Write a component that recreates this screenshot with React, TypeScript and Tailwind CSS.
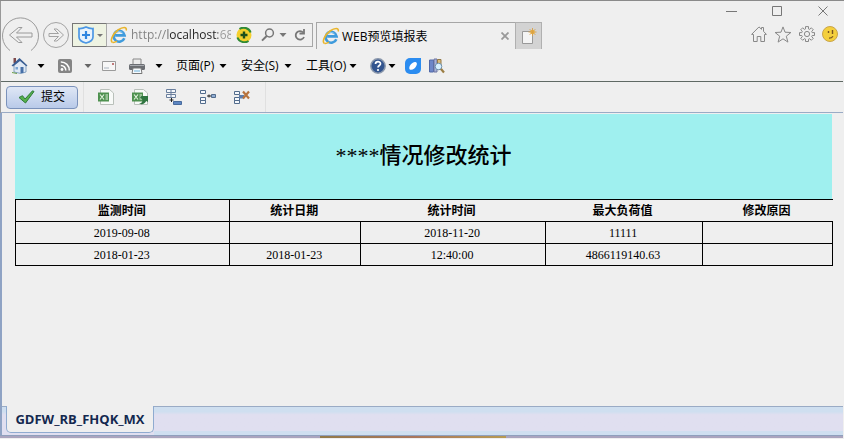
import type { ReactNode } from "react";

const rows = [
  ["2019-09-08", "", "2018-11-20", "11111", ""],
  ["2018-01-23", "2018-01-23", "12:40:00", "4866119140.63", ""],
];

const headers = ["监测时间", "统计日期", "统计时间", "最大负荷值", "修改原因"];

function Caret({ className = "text-black" }: { className?: string }) {
  return (
    <svg viewBox="0 0 8 4" className={`h-1 w-2 shrink-0 ${className}`} aria-hidden="true">
      <path d="M.5 0h7L4 4z" fill="currentColor" />
    </svg>
  );
}

function BrowserLogo() {
  return (
    <svg viewBox="0 0 18 18" className="size-[18px] shrink-0" fill="none" aria-hidden="true">
      <path d="M14.300 12.200A5.500 5.500 0 1 1 14.600 9.400H5.200" stroke="#3f9bdc" strokeWidth="2.600" />
      <path d="M5.400 7.600c.8-3 6.600-3 7.200 0" stroke="#8ccbf2" strokeWidth="1" />
      <path d="M2.600 16.400C-.5 15.500 2.500 8 8 4c4.500-3.200 9.200-3.800 8.200.5" stroke="#e9b52c" strokeWidth="1.600" />
      <path d="M2.600 16.400c1.400.4 3-.4 4.400-1.400" stroke="#e9b52c" strokeWidth="1.400" />
    </svg>
  );
}

function IconButton({ label, children, className = "" }: { label: string; children: ReactNode; className?: string }) {
  return (
    <button type="button" aria-label={label} className={`flex shrink-0 items-center ${className}`}>
      {children}
    </button>
  );
}

function WindowControls() {
  return (
    <div className="flex h-5 items-center justify-end gap-[35px] pr-[14px] text-[#777]">
      <IconButton label="最小化">
        <svg viewBox="0 0 11 11" className="size-[11px]" fill="none" stroke="currentColor">
          <path d="M0 5.500h11" />
        </svg>
      </IconButton>
      <IconButton label="最大化">
        <svg viewBox="0 0 11 11" className="size-[11px]" fill="none" stroke="currentColor">
          <path d="M.5.5h9v9h-9z" />
        </svg>
      </IconButton>
      <IconButton label="关闭">
        <svg viewBox="0 0 11 11" className="size-[11px]" fill="none" stroke="currentColor">
          <path d="M.5.5l9 9M9.500.5l-9 9" />
        </svg>
      </IconButton>
    </div>
  );
}

function AddressBar() {
  return (
    <div className="ml-[2px] flex h-6 w-[241px] shrink-0 items-center border border-[#a6a6a6]">
      <button
        type="button"
        aria-label="安全防护"
        className="-my-px -ml-px flex h-6 w-[35px] shrink-0 items-center justify-center gap-[2px] border border-[#777] border-r-[#aaa] bg-[#eef3e2]"
      >
        <svg viewBox="0 0 18 18" className="size-[18px]" fill="none" aria-hidden="true">
          <path d="M2 2.500c3 .2 5-.5 7-1.500 2 1 4 1.700 7 1.500V11c0 3-3 5-7 6-4-1-7-3-7-6z" fill="#e8f3fd" stroke="#4c97e4" strokeWidth="1.700" />
          <path d="M9 5v8M5 9h8" stroke="#2f86e0" strokeWidth="2.200" />
        </svg>
        <svg viewBox="0 0 6 3" className="h-[3px] w-[6px]" aria-hidden="true">
          <path d="M0 0h6L3 3z" fill="#777" />
        </svg>
      </button>
      <div className="ml-[3px] flex">
        <BrowserLogo />
      </div>
      <input
        type="text"
        aria-label="地址"
        defaultValue="http://localhost:68"
        className="ml-[3px] w-[100px] min-w-0 bg-[linear-gradient(90deg,#808080_37px,#222_37px,#222_87px,#999_87px)] bg-clip-text font-['Open_Sans','Noto_Sans',sans-serif] text-[12px] leading-4 text-transparent outline-none"
      />
      <IconButton label="加速" className="ml-[5px]">
        <svg viewBox="0 0 16 16" className="size-4" fill="none">
          <circle cx="8" cy="8" r="7.500" fill="#f5cf2d" />
          <path d="M3.500 2C7-.5 13 .5 14.600 5.500M1.400 10.500c1.600 4.500 7.600 6 11.100 3.500" stroke="#2f8a35" strokeWidth="2" />
          <path d="M8 4.500v7M4.500 8h7" stroke="#1e4f1c" strokeWidth="2.400" />
        </svg>
      </IconButton>
      <IconButton label="搜索" className="ml-[9px] text-[#777]">
        <svg viewBox="0 0 14 14" className="size-[14px]" fill="none" stroke="currentColor">
          <circle cx="8.500" cy="5" r="3.900" strokeWidth="1.500" />
          <path d="M5.700 8L1 12.600" strokeWidth="2" />
        </svg>
      </IconButton>
      <Caret className="ml-[4px] text-[#777]" />
      <IconButton label="刷新" className="ml-[7px] text-[#777]">
        <svg viewBox="0 0 12 14" className="h-[14px] w-3" fill="none" stroke="currentColor" strokeWidth="1.800">
          <path d="M9.200 4.500A4.300 4.300 0 1 0 10 9" />
          <path d="M10 1v4.500H5.500" />
        </svg>
      </IconButton>
    </div>
  );
}

function NavigationRow() {
  return (
    <div className="flex h-7 items-center pr-[5px]">
      <IconButton label="后退">
        <svg viewBox="0 0 38 28" className="h-7 w-[38px] overflow-visible" fill="none" stroke="#9a9a9a">
          <path d="M9 29.500A18 18 0 1 1 30 29.500" />
          <path d="M8.500 14l9-7.500h3.500l-5.500 5.500H31v4H15.500l5.500 5.500H17.500z" />
        </svg>
      </IconButton>
      <IconButton label="前进" className="ml-[3px]">
        <svg viewBox="0 0 28 28" className="size-7 overflow-visible" fill="none" stroke="#a3a3a3">
          <circle cx="14" cy="14" r="12.500" />
          <path d="M21.500 14l-6.500-6h-3l4.500 4.500H7v3h9.500L12 20h3z" />
        </svg>
      </IconButton>
      <AddressBar />
      <div className="ml-[3px] mt-px flex h-[27px] shrink-0 text-xs">
        <div className="flex w-[199px] items-center border-l border-t border-[#a6a6a6] pl-[5px] pr-[6px]">
          <BrowserLogo />
          <span className="ml-[2px] whitespace-nowrap pt-[2px] font-['Open_Sans','Noto_Sans_CJK_SC',sans-serif]">WEB预览填报表</span>
          <IconButton label="关闭标签页" className="ml-auto">
            <svg viewBox="0 0 8 8" className="size-2" stroke="#999" strokeWidth="1.800">
              <path d="M.5.5l7 7M7.500.5l-7 7" />
            </svg>
          </IconButton>
        </div>
        <button type="button" aria-label="新建标签页" className="flex w-[27px] items-center justify-center border border-b-0 border-[#b0b0b0] bg-[#d3d3d3]">
          <svg viewBox="0 0 16 18" className="h-[18px] w-4" fill="none">
            <path d="M1.500 4.500h10v12h-10z" fill="#f4f4f4" stroke="#999" />
            <circle cx="11.500" cy="5" r="2.200" fill="#f0b63a" />
            <path d="M11.500 1v8M7.500 5h8M8.700 2.200l5.600 5.600M14.300 2.200L8.700 7.800" stroke="#d9a045" strokeWidth=".9" />
          </svg>
        </button>
      </div>
      <div className="-mt-[2px] ml-auto flex items-center gap-[7px]">
        <IconButton label="主页">
          <svg viewBox="0 0 16 16" className="size-4" fill="none" stroke="#888">
            <path d="M2.500 8.500L.6 8.400 8 .9l2.500 2.400V1.500h2v3.800l2.900 3.100-1.900.1v7H9.800v-5H6.200v5H2.500z" />
          </svg>
        </IconButton>
        <IconButton label="收藏">
          <svg viewBox="0 0 18 17" className="h-[17px] w-[18px]" fill="none" stroke="#888">
            <path d="M9 .9l2 5.300 5.900.3-4.600 3.700 1.600 5.900L9 12.800l-4.900 3.300 1.600-5.900L1.100 6.500 7 6.200z" />
          </svg>
        </IconButton>
        <IconButton label="设置">
          <svg viewBox="0 0 16 16" className="size-4" fill="none" stroke="#888">
            <path d="M6.500.6h3v2.300l1.200.5L12.300 1.800l2 2-1.600 1.600.5 1.200h2.300v2.900h-2.300l-.5 1.200 1.600 1.600-2 2-1.600-1.600-1.200.5v2.300h-3v-2.300l-1.200-.5-1.600 1.600-2-2 1.600-1.600-.5-1.200H.5V6.600h2.300l.5-1.200-1.600-1.600 2-2 1.600 1.600 1.200-.5z" />
            <circle cx="8" cy="8" r="2.600" />
          </svg>
        </IconButton>
        <IconButton label="反馈">
          <svg viewBox="0 0 16 16" className="size-4" fill="none">
            <circle cx="8" cy="8" r="7.500" fill="#f4cf3d" stroke="#c9a449" />
            <path d="M6.500 5v2M10.500 4v4" stroke="#7a5520" strokeWidth="1.400" />
            <path d="M7 12.200c2 0 3.200-.6 4-2" stroke="#7a5520" strokeWidth="1.200" />
          </svg>
        </IconButton>
      </div>
    </div>
  );
}

function TextMenu({ label }: { label: string }) {
  return (
    <button type="button" className="flex w-[65px] shrink-0 items-center text-xs">
      <span className="w-[43px] whitespace-nowrap text-left">{label}</span>
      <Caret />
    </button>
  );
}

function MenuRow() {
  return (
    <div className="flex h-[33px] items-center border-b border-[#5f6964] pl-[10px] pt-px">
      <IconButton label="主页">
        <svg viewBox="0 0 17 17" className="size-[17px]" fill="none">
          <path d="M3 8v7l7 1.500 5-1.500V8L9 3z" fill="#dfe9f5" stroke="#6c8fb5" strokeWidth=".8" />
          <path d="M2.500 1h2.500v5H2.500z" fill="#7d4a4c" />
          <path d="M.5 8.500L8.500 1l8 7.500-1.200.8L9 4 2 9.500z" fill="#3b5f94" />
          <path d="M9.500 10h3v6h-3z" fill="#466fa7" />
          <path d="M4.500 10h2.500v2.500H4.500z" fill="#79a5d4" />
          <path d="M1 15.500l5 1" stroke="#6a9d4b" />
        </svg>
      </IconButton>
      <Caret className="ml-[9px]" />
      <IconButton label="订阅源" className="ml-[13px]">
        <svg viewBox="0 0 14 14" className="size-[14px]" fill="none">
          <rect width="14" height="14" rx="2" fill="#858585" />
          <circle cx="4" cy="10.500" r="1.400" fill="#fff" />
          <path d="M2.800 6.500a4.800 4.800 0 0 1 5 5M2.800 3a8.200 8.200 0 0 1 8.500 8.500" stroke="#fff" strokeWidth="1.500" />
        </svg>
      </IconButton>
      <Caret className="ml-[12px] text-[#666]" />
      <IconButton label="邮件" className="ml-[10px]">
        <svg viewBox="0 0 14 10" className="h-[10px] w-[14px]" fill="none">
          <path d="M.5.5h13v9H.5z" fill="#f7f7f7" stroke="#9b9b9b" />
          <path d="M2 7h5" stroke="#aab4c0" />
          <path d="M10 2h2v2h-2z" fill="#c17b7b" />
        </svg>
      </IconButton>
      <IconButton label="打印" className="ml-[13px]">
        <svg viewBox="0 0 16 16" className="size-4" fill="none">
          <path d="M4 1h8v6H4z" fill="#ececec" stroke="#888" />
          <rect y="6" width="16" height="6" rx="1.500" fill="#6b6e73" />
          <path d="M1 7.500h14" stroke="#a8abb0" />
          <path d="M4 10h8l1 5.500H3z" fill="#f6fafd" stroke="#777" />
          <path d="M5 13h6" stroke="#6db2dc" />
        </svg>
      </IconButton>
      <Caret className="ml-[10px]" />
      <div className="ml-[13px] flex">
        <TextMenu label="页面(P)" />
        <TextMenu label="安全(S)" />
        <TextMenu label="工具(O)" />
      </div>
      <IconButton label="帮助" className="-ml-px">
        <svg viewBox="0 0 16 16" className="size-4" fill="none">
          <circle cx="8" cy="8" r="7.200" fill="#33558f" stroke="#8b98ac" strokeWidth="1.500" />
          <path d="M5.500 6c0-3 5-3 5-.3C10.500 7.500 8 7.500 8 9.500" stroke="#fff" strokeWidth="1.700" />
          <circle cx="8" cy="12" r="1.100" fill="#fff" />
        </svg>
      </IconButton>
      <Caret className="ml-[2px]" />
      <IconButton label="扩展" className="ml-[9px]">
        <svg viewBox="0 0 16 16" className="size-4" fill="none">
          <path d="M5 0h11v11a5 5 0 0 1-5 5H5a5 5 0 0 1-5-5V5a5 5 0 0 1 5-5z" fill="#2b8cf0" />
          <path d="M4.300 10.500C4 7.500 7 4.500 10 4c1.500-.2 2.300 1.300 1.700 3-1 2.800-3.400 4.800-5.700 4.800-1 0-1.600-.4-1.700-1.300z" fill="#fff" />
        </svg>
      </IconButton>
      <IconButton label="查询" className="ml-2">
        <svg viewBox="0 0 16 16" className="size-4" fill="none">
          <path d="M.5 2h4v12h-4z" fill="#6d86c8" stroke="#5068a8" />
          <path d="M5 1h3v13H5z" fill="#a8b2d9" stroke="#6d75a0" />
          <path d="M8.500 1.500h3.500v10H8.500z" fill="#d9ba79" stroke="#927848" />
          <circle cx="9.500" cy="8.500" r="3.300" fill="#d7efff" stroke="#6f91ad" />
          <path d="M12 11l3 3.500" stroke="#9b7d43" strokeWidth="2.200" />
        </svg>
      </IconButton>
    </div>
  );
}

function ExcelIcon({ exporting = false }: { exporting?: boolean }) {
  return (
    <svg viewBox="0 0 17 16" className="h-4 w-[17px]" fill="none">
      <path d="M2.500.5h9l4 3.500v11.500h-13z" fill="#f8faf8" stroke="#b9c0ba" />
      <path d="M0 3.500h11v9H0z" fill="#4e914f" />
      <path d="M2 5.500l4 5M6 5.500l-4 5M7.500 6h2.500M7.500 8h2.500M7.500 10h2.500" stroke="#e4f3df" strokeWidth="1.200" />
      {exporting && <path d="M7 14.500c2.500 0 3.500-1.500 3.500-4l-2.500-2 1.500-1.500h6.500v6l-1.800-1c-1.200 2.700-4 4-7.200 2.500z" fill="#2f7540" />}
    </svg>
  );
}

function ReportToolbar() {
  return (
    <div className="flex h-[31px] items-center border-b border-[#9aabc5] pl-[5px]">
      <button
        type="button"
        className="flex h-[23px] w-[72px] items-center rounded-[4px] border border-[#7b92bb] bg-linear-to-b from-[#dfe7f5] to-[#b9cae9] pl-[11px] text-xs"
      >
        <svg viewBox="0 0 17 14" className="h-[14px] w-[17px]" fill="none" aria-hidden="true">
          <path d="M1 7.500l3.500-1.800L7 9 14.500.8l1.500.7L7.500 13z" fill="#55b04d" stroke="#2e7a38" />
        </svg>
        <span className="ml-[6px]">提交</span>
      </button>
      <div className="ml-[5px] flex h-full items-center border-x border-[#e0e0e0] px-[14px]">
        <div className="flex gap-[17px]">
          <IconButton label="导入Excel"><ExcelIcon /></IconButton>
          <IconButton label="导出Excel"><ExcelIcon exporting /></IconButton>
          <IconButton label="添加行">
            <svg viewBox="0 0 17 16" className="h-4 w-[17px]" fill="none">
              <path d="M.5.5h9v3h-9zM.5 5.500h9v3h-9zM5 .5v8" fill="#f5f8fc" stroke="#6a7f9d" />
              <path d="M5.500 9v4M3.500 11h4" stroke="#222" />
              <path d="M7.500 12.500h8v3h-8z" fill="#5d86c2" stroke="#486b9d" />
            </svg>
          </IconButton>
          <IconButton label="插入行">
            <svg viewBox="0 0 17 16" className="h-4 w-[17px]" fill="none">
              <path d="M.5 1.500h5v3h-5zM.5 8.500h5v3h-5zM.5 11.500h5v3h-5z" fill="#f5f8fc" stroke="#526c8c" />
              <path d="M7 7h4M9 5.500v3" stroke="#222" />
              <path d="M11.500 5.500h4v3h-4z" fill="#91add3" stroke="#526c8c" />
            </svg>
          </IconButton>
          <IconButton label="删除行">
            <svg viewBox="0 0 17 16" className="h-4 w-[17px]" fill="none">
              <path d="M.5 2.500h5v3h-5zM.5 8.500h5v3h-5zM.5 11.500h5v3h-5z" fill="#f5f8fc" stroke="#526c8c" />
              <path d="M5 6h5v3.500H5z" fill="#5d7ead" />
              <path d="M9 2.500l6 7M15 2.500l-6 7" stroke="#b8743e" strokeWidth="2.200" />
            </svg>
          </IconButton>
        </div>
      </div>
    </div>
  );
}

function ReportTable() {
  return (
    <table className="w-full table-fixed border-separate border-spacing-0 text-center text-xs leading-4 text-black">
      <caption className="mr-px h-[85px] bg-[#9ff0ef] pt-[26px] font-['Liberation_Serif','Noto_Sans_CJK_SC',serif] text-[22px] font-medium leading-8">
        ****情况修改统计
      </caption>
      <colgroup>
        <col className="w-[26.2%]" />
        <col className="w-[16%]" />
        <col className="w-[22.600%]" />
        <col className="w-[19.2%]" />
        <col className="w-[16%]" />
      </colgroup>
      <thead>
        <tr className="h-[22px]">
          {headers.map((title, i) => (
            <th key={title} scope="col" className={`border-t border-black p-0 pr-[2px] font-bold ${i < 2 ? "border-l" : ""}`}>
              {title}
            </th>
          ))}
        </tr>
      </thead>
      <tbody className="font-['Liberation_Serif',serif]">
        {rows.map((row, r) => (
          <tr key={r} className={r === rows.length - 1 ? "h-[23px]" : "h-[22px]"}>
            {row.map((value, c) => (
              <td
                key={c}
                className={`border-l border-t border-black p-0 pr-[2px] ${c === row.length - 1 ? "border-r" : ""} ${r === rows.length - 1 ? "border-b" : ""}`}
              >
                {value}
              </td>
            ))}
          </tr>
        ))}
      </tbody>
    </table>
  );
}

export default function App() {
  return (
    <div className="flex min-h-screen flex-col border-t border-[#8a8a8a] bg-[#efefef] font-['Open_Sans','Noto_Sans_CJK_SC',sans-serif] text-black">
      <header className="mr-px border-l border-[#999]">
        <WindowControls />
        <NavigationRow />
        <MenuRow />
        <ReportToolbar />
      </header>
      <main className="flex-1 border-l-2 border-[#8fa3c4] pl-[13px] pr-[11px] pt-px">
        <ReportTable />
      </main>
      <footer>
        <div className="mr-px flex h-[29px] items-start border-l-2 border-[#8fa3c4] bg-linear-to-b from-[#cfdff0] from-20% via-[#e0dff0] via-30% to-[#e0dff0]">
          <div className="h-full w-1 shrink-0 border-t border-[#9aabc5]" />
          <button
            type="button"
            className="h-[27px] w-[148px] shrink-0 rounded-b-[5px] border border-t-0 border-[#8fabd0] bg-[#efefef] pt-px font-['Open_Sans','Noto_Sans',sans-serif] text-[13px] font-bold text-[#14284f]"
          >
            GDFW_RB_FHQK_MX
          </button>
          <div className="h-full flex-1 border-b-4 border-t border-t-[#9aabc5] border-b-[#cfdff0]" />
        </div>
        <div className="mb-px mr-px h-[3px] border-t border-[#8fa0bd] bg-[#aaa4be]">
          <div className="ml-[38%] h-full w-[22%] bg-linear-to-r from-[#927a49] via-[#a9765d] to-[#b79a52]" />
        </div>
      </footer>
    </div>
  );
}
